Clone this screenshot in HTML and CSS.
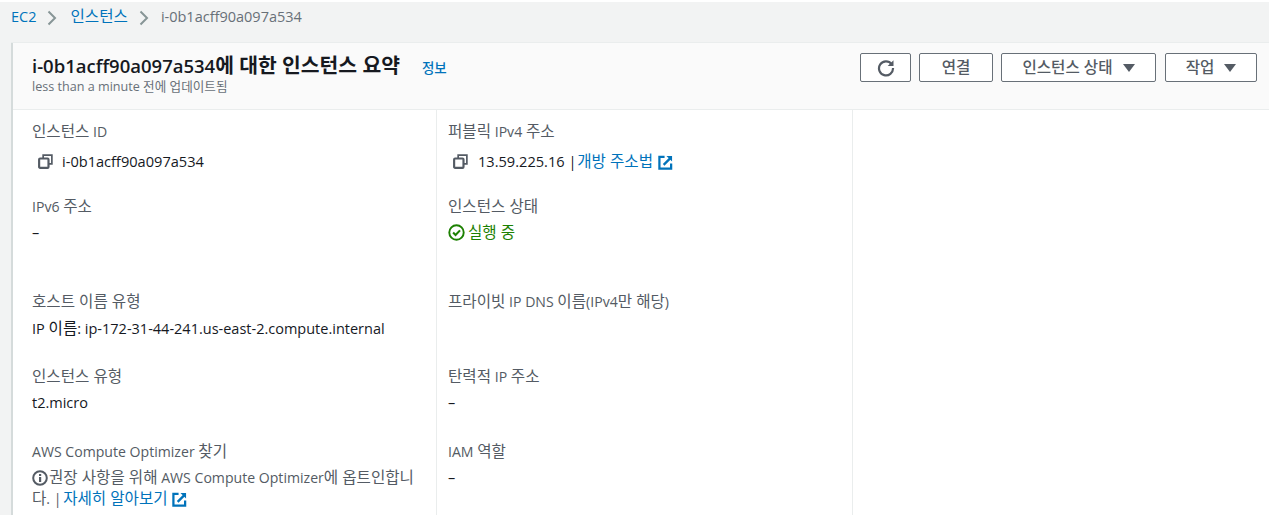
FILE: index.html
```html
<!DOCTYPE html>
<html lang="ko">
<head>
    <meta charset="UTF-8">
    <title>인스턴스 요약</title>
    <link rel="stylesheet" href="styles.css">
</head>
<body>
    <svg class="svg-defs" width="0" height="0">
        <symbol id="icon-copy" viewBox="0 0 16 16">
            <path d="M5.500 4.500V1.200h9.300v9.300h-3.300" fill="none" stroke="currentColor" stroke-width="1.800"/>
            <rect x="1.200" y="4.800" width="10" height="10" rx="1" fill="none" stroke="currentColor" stroke-width="2.300"/>
        </symbol>
        <symbol id="icon-external" viewBox="0 0 16 16">
            <path d="M7 2H1.500v12.500H14V9" fill="none" stroke="currentColor" stroke-width="2.400"/>
            <path d="M6 10.500L14 2.500" fill="none" stroke="currentColor" stroke-width="2.400"/>
            <path d="M9 1h6v6z" fill="currentColor"/>
        </symbol>
    </svg>

    <nav class="breadcrumb">
        <a class="link" href="#">EC2</a>
        <svg class="crumb-arrow" viewBox="0 0 10 16"><path d="M1.500 1.500L8 8l-6.500 6.500" fill="none" stroke="currentColor" stroke-width="2"/></svg>
        <a class="link crumb-ko" href="#"><span class="ko">인스턴스</span></a>
        <svg class="crumb-arrow" viewBox="0 0 10 16"><path d="M1.500 1.500L8 8l-6.500 6.500" fill="none" stroke="currentColor" stroke-width="2"/></svg>
        <span class="crumb-current">i-0b1acff90a097a534</span>
    </nav>

    <section class="card">
        <header class="card-header">
            <div class="title-block">
                <div class="title-row">
                    <h1>i-0b1acff90a097a534<span class="title-ko">에 대한 인스턴스 요약</span></h1>
                    <a class="link info" href="#">정보</a>
                </div>
                <p class="updated">less than a minute 전에 업데이트됨</p>
            </div>
            <div class="actions">
                <button class="btn btn-refresh" aria-label="새로 고침">
                    <svg class="refresh-icon" viewBox="0 0 18 18"><path d="M14.600 5.200A7 7 0 1 0 16 9" fill="none" stroke="currentColor" stroke-width="2.200"/><path d="M16.500 1.200v5.800h-5.800z" fill="currentColor"/></svg>
                </button>
                <button class="btn btn-connect">연결</button>
                <button class="btn btn-state">인스턴스 상태 <span class="caret"></span></button>
                <button class="btn btn-work">작업 <span class="caret"></span></button>
            </div>
        </header>

        <div class="details">
            <div class="column">
                <div class="item row-1">
                    <div class="label"><span class="ko">인스턴스</span> ID</div>
                    <div class="value copy-value"><svg class="copy"><use href="#icon-copy"/></svg>i-0b1acff90a097a534</div>
                </div>
                <div class="item row-2">
                    <div class="label">IPv6 <span class="ko">주소</span></div>
                    <div class="value">–</div>
                </div>
                <div class="item row-3">
                    <div class="label"><span class="ko">호스트 이름 유형</span></div>
                    <div class="value">IP <span class="ko">이름</span>: ip-172-31-44-241.us-east-2.compute.internal</div>
                </div>
                <div class="item row-4">
                    <div class="label"><span class="ko">인스턴스 유형</span></div>
                    <div class="value">t2.micro</div>
                </div>
                <div class="item">
                    <div class="label">AWS Compute Optimizer <span class="ko">찾기</span></div>
                    <div class="value muted">
                        <svg class="info-icon" viewBox="0 0 16 16"><circle cx="8" cy="8" r="6.800" fill="none" stroke="currentColor" stroke-width="2"/><rect x="7" y="7" width="2.200" height="5" fill="currentColor"/><rect x="7" y="4" width="2.200" height="2" fill="currentColor"/></svg><span class="ko">권장 사항을 위해</span> AWS Compute Optimizer<span class="ko">에 옵트인합니</span><br><span class="ko">다</span>. | <a class="link learn-link" href="#"><span class="ko">자세히 알아보기</span> <svg class="external"><use href="#icon-external"/></svg></a>
                    </div>
                </div>
            </div>

            <div class="column">
                <div class="item row-1">
                    <div class="label"><span class="ko">퍼블릭</span> IPv4 <span class="ko">주소</span></div>
                    <div class="value copy-value"><svg class="copy"><use href="#icon-copy"/></svg>13.59.225.16 |&nbsp;<a class="link address-link" href="#"><span class="ko">개방 주소법</span> <svg class="external"><use href="#icon-external"/></svg></a></div>
                </div>
                <div class="item row-2">
                    <div class="label"><span class="ko">인스턴스 상태</span></div>
                    <div class="value running">
                        <svg class="check" viewBox="0 0 16 16"><circle cx="8" cy="8" r="6.800" fill="none" stroke="currentColor" stroke-width="1.800"/><path d="M4.800 8l2.300 2.300 4.200-4.300" fill="none" stroke="currentColor" stroke-width="2"/></svg><span class="ko">실행 중</span>
                    </div>
                </div>
                <div class="item row-3">
                    <div class="label"><span class="ko">프라이빗</span> IP DNS <span class="ko">이름</span>(IPv4<span class="ko">만 해당</span>)</div>
                </div>
                <div class="item row-4">
                    <div class="label"><span class="ko">탄력적</span> IP <span class="ko">주소</span></div>
                    <div class="value">–</div>
                </div>
                <div class="item">
                    <div class="label">IAM <span class="ko">역할</span></div>
                    <div class="value">–</div>
                </div>
            </div>

            <div class="column"></div>
        </div>
    </section>
</body>
</html>
```

FILE: styles.css
```css
* {
    margin: 0;
    padding: 0;
    box-sizing: border-box;
}

html, body {
    height: 515px;
    overflow: hidden;
}

body {
    font-family: 'Open Sans', 'Noto Sans CJK KR', sans-serif;
    font-size: 14.500px;
    color: #16191f;
    background-color: #f2f3f3;
    border-top: 2px solid #ffffff;
    padding: 0 0 0 11px;
}

.svg-defs {
    display: block;
    height: 0;
}

.link {
    color: #0073bb;
}

a {
    text-decoration: none;
}

/* El coreano se ve mas grande que el texto latino */
.ko {
    font-size: 15.600px;
}

/* Migas de pan */
.breadcrumb {
    display: flex;
    align-items: center;
    height: 41px;
    padding-bottom: 12px;
}

.crumb-arrow {
    width: 10px;
    height: 16px;
    margin: 2px 13px 0 11px;
    color: #879596;
}

.crumb-ko {
    margin-top: -3px;
}

.crumb-current {
    color: #687078;
    margin-left: -1px;
}

.card {
    background-color: #ffffff;
    border-left: 2px solid #d5dbdb;
    height: 472px;
    box-shadow: 0 -1px 0 #eaeded;
}

.card-header {
    display: flex;
    justify-content: space-between;
    height: 67px;
    background-color: #fafafa;
    border-bottom: 1px solid #eaeded;
    padding: 9px 12px 0 19px;
}

.title-row {
    display: flex;
    align-items: center;
}

h1 {
    font-size: 18.500px;
    font-weight: 600;
    line-height: 27px;
}

.title-ko {
    font-size: 20.400px;
}

.info {
    font-size: 13.500px;
    font-weight: 500;
    margin-left: 22px;
    margin-top: 3px;
}

.updated {
    font-size: 12.600px;
    color: #687078;
    line-height: 16px;
}

.actions {
    display: flex;
    gap: 8px;
    padding-top: 1px;
}

.btn {
    display: flex;
    align-items: center;
    justify-content: center;
    height: 29px;
    padding-bottom: 3px;
    font-family: inherit;
    font-size: 15.600px;
    font-weight: 500;
    color: #545b64;
    background-color: #ffffff;
    border: 1px solid #687078;
    border-radius: 2px;
}

.btn-refresh {
    width: 51px;
    padding-bottom: 0;
}

.btn-connect {
    width: 74px;
}

.btn-state {
    width: 155px;
}

.btn-work {
    width: 92px;
    margin-left: 1px;
}

.refresh-icon {
    width: 18px;
    height: 18px;
}

.caret {
    width: 0;
    height: 0;
    margin-left: 10px;
    margin-top: 3px;
    border-left: 6px solid transparent;
    border-right: 6px solid transparent;
    border-top: 8px solid #545b64;
}

.details {
    display: grid;
    grid-template-columns: 424px 416px 1fr;
    height: 405px;
}

.column {
    padding: 11px 8px 0 19px;
    border-right: 1px solid #eaeded;
}

.column + .column {
    padding-left: 11px;
}

.column:last-child {
    border-right: none;
}

.item {
    height: 75px;
}

.row-2 {
    height: 95px;
}

.label {
    font-size: 14.100px;
    line-height: 20px;
    color: #545b64;
}

.value {
    margin-top: 5px;
    line-height: 22px;
}

.copy-value {
    display: flex;
    align-items: center;
    font-size: 14.600px;
    padding-left: 6px;
    margin-top: 8px;
}

.column + .column .copy-value {
    padding-left: 5px;
}

.copy {
    width: 15px;
    height: 15px;
    margin-right: 9px;
    color: #545b64;
}

.column + .column .copy {
    margin-right: 10px;
}

.address-link {
    margin-left: -3px;
}

.external {
    display: inline-block;
    width: 15px;
    height: 15px;
    margin-left: 1px;
    vertical-align: -3px;
}

.running {
    color: #1d8102;
    display: flex;
    align-items: center;
    margin-top: 4px;
}

.check {
    width: 17px;
    height: 17px;
    margin-right: 3px;
}

.muted {
    font-size: 14.100px;
    color: #545b64;
    margin-top: 5px;
    line-height: 20px;
}

.learn-link {
    margin-left: -2px;
}

.info-icon {
    width: 16px;
    height: 16px;
    margin-right: 1px;
    vertical-align: -3px;
}
```
